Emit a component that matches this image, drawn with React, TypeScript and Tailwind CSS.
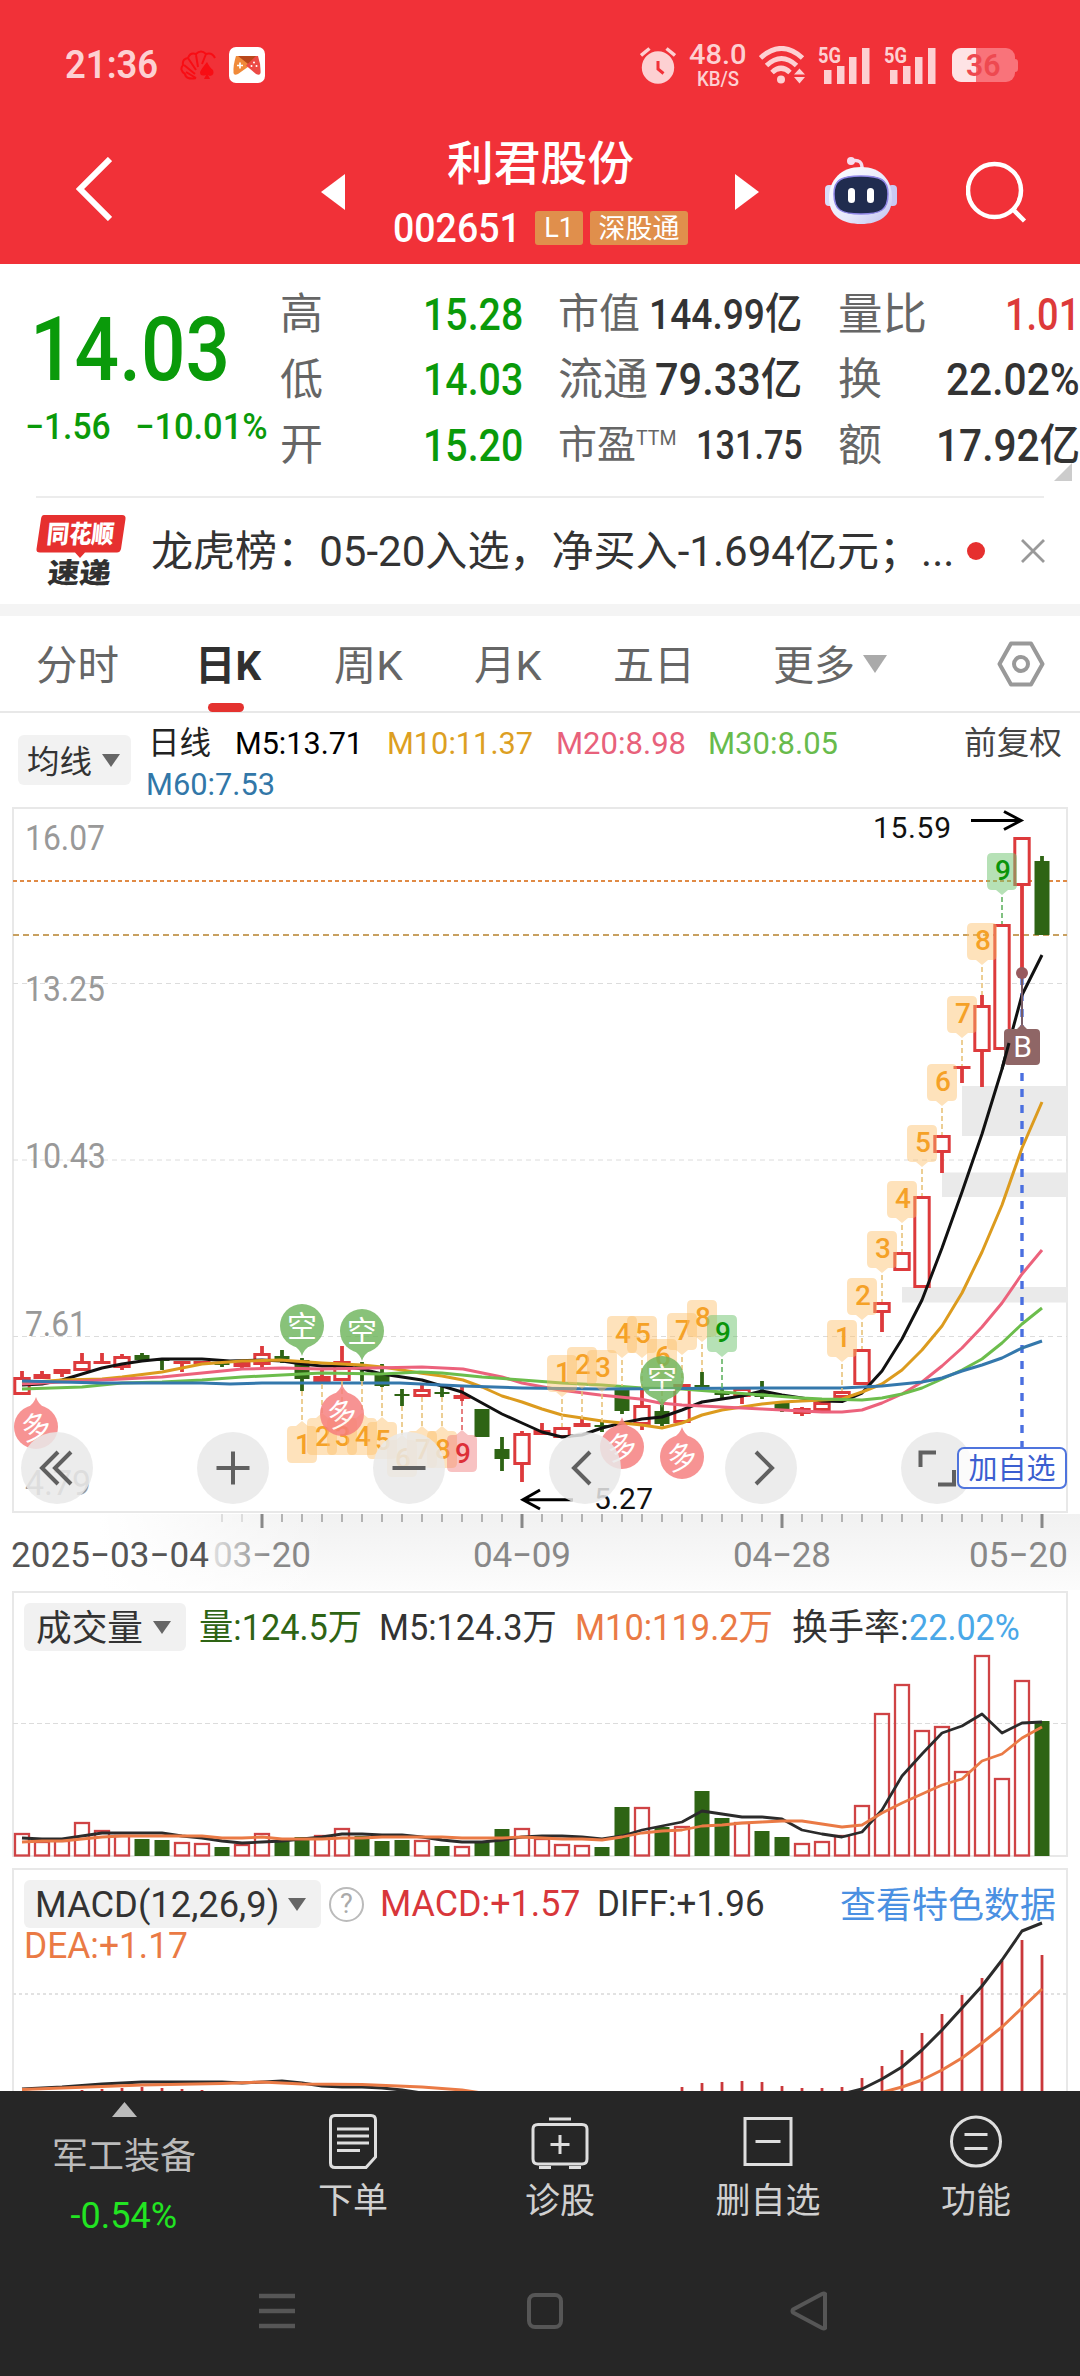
import { useLayoutEffect, useRef, type ReactNode } from "react";

/** Text condensed or widened horizontally so that it fills its box. */
function Fit({ className = "", children }: { className?: string; children: ReactNode }) {
  const outer = useRef<HTMLSpanElement>(null);
  const inner = useRef<HTMLSpanElement>(null);
  useLayoutEffect(() => {
    if (!outer.current || !inner.current) return;
    const natural = inner.current.offsetWidth;
    inner.current.style.transform = `scaleX(${outer.current.clientWidth / natural})`;
  });
  return (
    <span ref={outer} className={"flex shrink-0 justify-start leading-none " + className}>
      <span ref={inner} className="inline-block shrink-0 origin-left whitespace-nowrap">
        {children}
      </span>
    </span>
  );
}

const RED = "#dd3a3c";
const GREEN = "#2e6414";
const cx = (i: number) => 22 + 20 * i;

type Candle = [up: number, high: number, top: number, bottom: number, low: number];
const candles: Candle[] = [
  [1, 1371, 1377, 1395, 1395], [1, 1371, 1374, 1379, 1379], [1, 1369, 1369, 1374, 1377], [1, 1353, 1361, 1371, 1371],
  [1, 1353, 1361, 1364, 1364], [1, 1354, 1356, 1368, 1370], [0, 1353, 1355, 1360, 1361], [0, 1359, 1360, 1361, 1370],
  [1, 1361, 1361, 1364, 1372], [1, 1361, 1361, 1364, 1364], [0, 1361, 1363, 1365, 1367], [1, 1361, 1362, 1367, 1369],
  [1, 1346, 1353, 1365, 1368], [0, 1350, 1356, 1359, 1363], [0, 1358, 1360, 1379, 1391], [1, 1369, 1376, 1382, 1384],
  [1, 1346, 1361, 1381, 1381], [0, 1362, 1365, 1367, 1381], [0, 1364, 1375, 1386, 1387], [0, 1389, 1394, 1396, 1406],
  [1, 1385, 1389, 1397, 1397], [0, 1387, 1392, 1394, 1397], [1, 1387, 1395, 1399, 1401], [0, 1409, 1409, 1437, 1437],
  [0, 1437, 1449, 1459, 1471], [1, 1431, 1433, 1465, 1482], [1, 1423, 1430, 1435, 1435], [1, 1427, 1427, 1438, 1438],
  [1, 1419, 1423, 1427, 1427], [0, 1422, 1425, 1427, 1432], [0, 1386, 1390, 1411, 1414], [1, 1388, 1405, 1425, 1430],
  [0, 1405, 1411, 1424, 1426], [1, 1384, 1384, 1423, 1423], [0, 1372, 1385, 1388, 1388], [0, 1388, 1393, 1395, 1399],
  [1, 1388, 1388, 1397, 1404], [0, 1381, 1393, 1397, 1399], [0, 1401, 1403, 1410, 1412], [1, 1407, 1408, 1414, 1416],
  [1, 1402, 1402, 1411, 1411], [1, 1391, 1391, 1398, 1398], [1, 1349, 1349, 1385, 1385], [1, 1302, 1302, 1313, 1332],
  [1, 1252, 1252, 1271, 1271], [1, 1196, 1196, 1288, 1288], [1, 1135, 1135, 1153, 1173], [1, 1066, 1066, 1069, 1083],
  [1, 995, 1005, 1052, 1087], [1, 924, 924, 1050, 1050], [1, 837, 837, 886, 973], [0, 856, 861, 935, 935],
];

const ma5 = "22,1385 42,1384 62,1380 82,1374 102,1368 122,1364 142,1361 162,1359 202,1359 230,1361 262,1360 282,1361 302,1364 322,1366 342,1366 362,1369 382,1374 402,1377 422,1380 442,1386 462,1392 482,1403 502,1414 522,1423 542,1432 562,1437 582,1435 602,1428 622,1423 642,1419 662,1417 682,1410 702,1402 722,1399 742,1396 762,1391 782,1395 802,1398 822,1401 842,1401.6 862,1393 882,1371 902,1339 922,1300 942,1248 962,1192 982,1134 1002,1069 1022,995 1042,955";
const ma10 = "22,1383 62,1380 102,1379 122,1377 162,1372 202,1364 242,1361 280,1360 322,1363 362,1365 382,1367 402,1370 420,1373 442,1376 463,1380 482,1387 502,1396 522,1402 542,1409 562,1415 582,1418 602,1421 622,1423 642,1425 662,1428 682,1423 702,1415 722,1410 742,1407 762,1404 782,1402 802,1401 822,1400 842,1399 862,1392 882,1384 902,1370 922,1350 942,1326 962,1293 982,1252 1002,1205 1022,1148 1042,1102";
const ma20 = "22,1384 82,1381 122,1379 162,1377 202,1373 242,1369 282,1368 322,1369 422,1367 463,1369 502,1377 522,1383 560,1390 600,1395 640,1399 660,1403 682,1405 722,1407 762,1409 802,1411 822,1412 842,1412 862,1410 882,1403 902,1394 922,1382 942,1366 962,1348 982,1327 1002,1303 1022,1274 1042,1250";
const ma30 = "22,1389 82,1387 122,1383 162,1382 202,1380 242,1377 282,1375 322,1373 382,1374 420,1372 442,1373 482,1377 522,1380 562,1383 602,1385 642,1388 682,1389 722,1392 762,1395 802,1398 822,1399 862,1400 882,1398 902,1394 922,1388 942,1379 962,1370 982,1359 1002,1343 1022,1324 1042,1308";
const ma60 = "22,1381 102,1383 162,1383 202,1383 230,1384 262,1383 322,1383 400,1383 463,1386 522,1388 600,1389 780,1388 842,1388 882,1386 922,1382 942,1378 962,1371 982,1365 1002,1358 1022,1348 1042,1341";

type Mark = [x: number, top: number, label: string, color?: "g" | "r"];
const upMarks: Mark[] = [
  [562, 1355, "1"], [582, 1347, "2"], [602, 1350, "3"], [622, 1316, "4"], [642, 1316, "5"], [662, 1339, "6"],
  [682, 1313, "7"], [702, 1300, "8"], [722, 1315, "9", "g"], [842, 1320, "1"], [862, 1278, "2"], [882, 1231, "3"],
  [902, 1181, "4"], [922, 1125, "5"], [942, 1064, "6"], [962, 996, "7"], [982, 923, "8"], [1002, 853, "9", "g"],
];
const downMarks: Mark[] = [
  [302, 1426, "1"], [322, 1418, "2"], [342, 1418, "3"], [362, 1418, "4"], [382, 1422, "5"], [402, 1440, "6"],
  [422, 1431, "7"], [442, 1431, "8"], [462, 1435, "9", "r"],
];
const markFill = { o: "rgba(252,190,105,0.45)", g: "rgba(115,198,115,0.52)", r: "rgba(240,120,120,0.45)" };
const markText = { o: "#f5a127", g: "#0a950a", r: "#dd2f38" };
const markLine = { o: "#e8c27a", g: "#62b262", r: "#e06060" };

const idx = (x: number) => Math.round((x - 22) / 20);

function UpMark({ m }: { m: Mark }) {
  const [x, y, t, c = "o"] = m;
  return (
    <g>
      <path d={`M${x} ${y + 44}V${candles[idx(x)][1]}`} stroke={markLine[c]} strokeWidth="1.6" strokeDasharray="5 3" />
      <path d={`M${x - 10} ${y}h20q5 0 5 5v27q0 5-5 5h-4l-6 5l-6-5h-4q-5 0-5-5v-27q0-5 5-5z`} fill={markFill[c]} />
      <text x={x + 1} y={y + 27} fontSize="28" fontWeight="500" textAnchor="middle" fill={markText[c]}>{t}</text>
    </g>
  );
}

function DownMark({ m }: { m: Mark }) {
  const [x, y, t, c = "o"] = m;
  return (
    <g>
      <path d={`M${x} ${candles[idx(x)][4]}V${y - 5}`} stroke={markLine[c]} strokeWidth="1.6" strokeDasharray="5 3" />
      <path d={`M${x - 10} ${y}h4l6-5l6 5h4q5 0 5 5v27q0 5-5 5h-20q-5 0-5-5v-27q0-5 5-5z`} fill={markFill[c]} />
      <text x={x + 1} y={y + 28} fontSize="28" fontWeight="500" textAnchor="middle" fill={markText[c]}>{t}</text>
    </g>
  );
}

function Pin({ x, y, long }: { x: number; y: number; long?: boolean }) {
  return (
    <g opacity="0.82">
      <circle cx={x} cy={y} r="22" fill={long ? "#f67c7c" : "#6fb55c"} />
      <path
        d={long ? `M${x - 9} ${y - 19}Q${x - 2} ${y - 23} ${x} ${y - 30}Q${x + 2} ${y - 23} ${x + 9} ${y - 19}z` : `M${x - 9} ${y + 19}Q${x - 2} ${y + 23} ${x} ${y + 30}Q${x + 2} ${y + 23} ${x + 9} ${y + 19}z`}
        fill={long ? "#f67c7c" : "#6fb55c"}
      />
      <text x={x} y={y + 11} fontSize="30" textAnchor="middle" fill="#fff" transform={long ? `rotate(-14 ${x} ${y})` : undefined}>
        {long ? "多" : "空"}
      </text>
    </g>
  );
}

function MainChart() {
  return (
    <svg viewBox="0 806 1080 708" className="block h-[708px] w-[1080px]" fill="none">
      <rect x="13" y="808" width="1054" height="704" stroke="#e8e8e8" strokeWidth="2" />
      {[983.5, 1160, 1336.5].map((y) => (
        <path key={y} d={`M13 ${y}H1067`} stroke="#dcdcdc" strokeDasharray="5 4" />
      ))}
      {([["16.07", 850, 78], ["13.25", 1001, 78], ["10.43", 1168, 79], ["7.61", 1336, 60], ["4.79", 1495, 64]] as const).map(([t, y, w]) => (
        <text key={t} x="25" y={y} fontSize="35" fontWeight="450" fill="#999" textLength={w + 2} lengthAdjust="spacingAndGlyphs">{t}</text>
      ))}
      <g fill="#eaeaea">
        <rect x="962" y="1086" width="106" height="50" />
        <rect x="942" y="1172.5" width="126" height="24.5" />
        <rect x="902" y="1287" width="166" height="15.5" />
      </g>
      <path d="M13 881H1067" stroke="#e08a45" strokeWidth="2" strokeDasharray="4 3" />
      <path d="M13 935H1067" stroke="#c8a060" strokeWidth="2" strokeDasharray="6 4" />
      {candles.map(([up, high, top, bottom, low], i) => {
        const h = bottom - top;
        const c = up ? RED : GREEN;
        return (
          <g key={i}>
            <path d={`M${cx(i)} ${high}V${top}M${cx(i)} ${bottom}V${low}`} stroke={c} strokeWidth="3.8" />
            {up && h > 5 ? (
              <rect x={cx(i) - 7.2} y={top + 1.5} width="14.4" height={h - 3} stroke={c} strokeWidth="3" fill="#fff" />
            ) : (
              <rect x={cx(i) - (up ? 8.5 : 7.5)} y={top} width={up ? 17 : 15} height={Math.max(h, 1)} fill={c} />
            )}
          </g>
        );
      })}
      <path d="M1022 977V1447" stroke="#4a6fe0" strokeWidth="3.4" strokeDasharray="8 8" />
      <g strokeWidth="3" strokeLinejoin="round">
        <polyline points={ma5} stroke="#111" />
        <polyline points={ma10} stroke="#dc9b1e" />
        <polyline points={ma20} stroke="#ec627c" />
        <polyline points={ma30} stroke="#6cbd4c" />
        <polyline points={ma60} stroke="#3478ac" />
      </g>
      {upMarks.map((m, i) => <UpMark key={i} m={m} />)}
      {downMarks.map((m, i) => <DownMark key={i} m={m} />)}
      <Pin x={302} y={1326} />
      <Pin x={362} y={1331} />
      <Pin x={662} y={1378} />
      <Pin x={36} y={1427} long />
      <Pin x={342} y={1414} long />
      <Pin x={622} y={1447} long />
      <Pin x={682} y={1457} long />
      <path d="M1022 973V1026" stroke="#775c66" strokeWidth="2" />
      <circle cx="1022" cy="973" r="6" fill="#985a5e" />
      <path d="M1008 1029h9l5-5l5 5h9q4 0 4 4v28q0 4-4 4h-28q-4 0-4-4v-28q0-4 4-4z" fill="#8f6666" />
      <text x="1022.5" y="1057" fontSize="30" textAnchor="middle" fill="#fff">B</text>
      <path d="M1002 1069L1009 1043" stroke="#111" strokeWidth="3" />
      <g stroke="#000" strokeWidth="3">
        <path d="M971 820.5H1020M1004 811.5L1021 820.5L1004 829.5" />
        <path d="M573 1499.7H524M540 1490L523 1499.7L540 1509" />
      </g>
      <text x="873" y="838" fontSize="30" fill="#111" textLength="78">15.59</text>
      <text x="594" y="1508.5" fontSize="30" fill="#111" textLength="59">5.27</text>
    </svg>
  );
}

const volumes: number[] = [
  1834, 1842, 1841, 1823, 1831, 1836, -1839, -1840, 1843, 1844, -1847, 1845, 1834, -1840, -1837, 1836, 1829, -1836, -1841,
  -1840, 1841, -1846, 1847, -1842, -1829, 1829, 1839, 1845, 1846, -1847, -1807, 1808, -1827, 1827, -1791, -1818, 1823,
  -1831, -1837, 1844, 1842, 1836, 1806, 1714, 1685, 1731, 1727, 1772, 1656, 1779, 1681, -1721,
];
const vol5 = [
  1838, 1839, 1839, 1836, 1833, 1833, 1833, 1833, 1836, 1838, 1841, 1843, 1842, 1841, 1839, 1837, 1834, 1834, 1835, 1835,
  1837, 1840, 1842, 1842, 1840, 1837, 1836, 1836, 1837, 1839, 1836, 1830, 1826, 1822, 1811, 1814, 1817, 1817, 1819, 1830,
  1834, 1837, 1832, 1810, 1776, 1754, 1733, 1726, 1714, 1733, 1723, 1722,
];
const vol10 = [
  1842, 1841, 1841, 1839, 1837, 1836, 1836, 1836, 1836, 1836, 1838, 1838, 1837, 1839, 1839, 1839, 1838, 1838, 1837, 1837,
  1837, 1837, 1838, 1838, 1838, 1837, 1838, 1839, 1839, 1840, 1837, 1833, 1831, 1830, 1826, 1825, 1823, 1822, 1821, 1821,
  1824, 1827, 1825, 1813, 1803, 1794, 1785, 1779, 1761, 1754, 1738, 1727,
];
const poly = (a: number[]) => a.map((y, i) => `${cx(i)},${y}`).join(" ");

function VolumeChart() {
  return (
    <svg viewBox="0 1590 1080 270" className="absolute inset-0 h-[270px] w-[1080px]" fill="none">
      <rect x="13" y="1592" width="1054" height="264" stroke="#e8e8e8" strokeWidth="2" />
      <path d="M13 1723.5H1067" stroke="#dcdcdc" strokeDasharray="5 3" />
      {volumes.map((v, i) =>
        v > 0 ? (
          <rect key={i} x={cx(i) - 7} y={v} width="14" height={1855.5 - v} stroke="#cf4345" strokeWidth="2.3" />
        ) : (
          <rect key={i} x={cx(i) - 7.5} y={-v} width="15" height={1856 + v} fill={GREEN} />
        ),
      )}
      <polyline points={poly(vol5)} stroke="#2b2b2b" strokeWidth="2.8" strokeLinejoin="round" />
      <polyline points={poly(vol10)} stroke="#ea7a45" strokeWidth="2.8" strokeLinejoin="round" />
    </svg>
  );
}

const macd: [number, number][] = [
  [3, 2090], [4, 2089], [5, 2088], [6, 2087], [7, 2088], [8, 2089], [9, 2090], [33, 2087], [34, 2083], [35, 2082], [36, 2081],
  [37, 2082], [38, 2086], [39, 2088], [40, 2088], [41, 2087], [42, 2078], [43, 2066], [44, 2050], [45, 2033], [46, 2014],
  [47, 1995], [48, 1978], [49, 1961], [50, 1940], [51, 1955],
];
const diff = "22,2089 62,2087 102,2084 142,2082 222,2082 242,2083 282,2081 302,2083 322,2086 342,2087 362,2087 382,2088 402,2090 422,2093";
const diffR = "842,2094 862,2089 882,2079 902,2067 922,2050 942,2030 962,2008 982,1986 1002,1960 1022,1931 1042,1923";
const dea = "22,2089.5 62,2088 142,2085 222,2083.5 262,2082 302,2084 362,2084.5 422,2087 462,2090 482,2093";
const deaR = "876,2094 902,2087 922,2080 942,2070 962,2058 982,2043 1002,2027 1022,2008 1042,1989";

function MacdChart() {
  return (
    <svg viewBox="0 1860 1080 231" className="absolute inset-0 h-[231px] w-[1080px]" fill="none">
      <path d="M13 2100V1869H1067V2100" stroke="#e8e8e8" strokeWidth="2" />
      <path d="M13 1994H1067" stroke="#e2e2e2" strokeWidth="2" strokeDasharray="3 3" />
      {macd.map(([i, y]) => (
        <path key={i} d={`M${cx(i)} ${y}V2092`} stroke="#c9383a" strokeWidth="2.8" />
      ))}
      <g strokeWidth="3" strokeLinejoin="round">
        <polyline points={diff} stroke="#2b2b2b" />
        <polyline points={diffR} stroke="#2b2b2b" />
        <polyline points={dea} stroke="#ea7a45" />
        <polyline points={deaR} stroke="#ea7a45" />
      </g>
    </svg>
  );
}

function Signal() {
  return (
    <svg viewBox="0 0 52 38" className="h-[38px] w-[52px] shrink-0 overflow-visible">
      <text x="0" y="17" fontSize="22" fontWeight="700" fill="#fdd0d2" textLength="23" lengthAdjust="spacingAndGlyphs">5G</text>
      <path d="M6 24h7.5v14H6zM19 20h7.5v18H19zM31 11h7.5v27H31zM44 2h7.5v36H44z" fill="#fdd0d2" />
    </svg>
  );
}

function StatusBar() {
  return (
    <div className="flex h-[130px] items-center text-[#fdd0d2]">
      <Fit className="ml-[65px] w-[93px] text-[38px] font-semibold">21:36</Fit>
      <svg viewBox="0 0 36 30" className="ml-[22px] h-[30px] w-[36px]" fill="none" stroke="#f80d14" strokeWidth="2">
        <path d="M16 28Q6 30 5 24Q-1 20 3 15Q2 9 8 8Q10 2 16 4Q21 -1 26 4Q32 2 35 8M16 28L6 22M15 24L4 15M16 20L8 8M18 17L16 5M22 14L26 4" />
        <path d="M27 12Q30 18 33 20Q35 25 30 26L28 25L30 29H24L26 25Q20 27 20 22Q22 18 27 12z" fill="#f80d14" stroke="none" />
      </svg>
      <svg viewBox="0 0 36 36" className="ml-[13px] h-[36px] w-[36px]">
        <rect width="36" height="36" rx="7" fill="#fff" />
        <path d="M8 9H28L18 19z" fill="#b8471a" />
        <path d="M7 9Q4 18 4.500 26Q5 29 9 27L21 18.500L9 9z" fill="#f08a3a" />
        <path d="M29 9Q32 18 31.500 26Q31 29 27 27L17 18.500L27 9z" fill="#ec4a45" />
        <path d="M11 15.500v6M8 18.500h6" stroke="#fff" strokeWidth="1.700" />
        <g fill="#fff"><circle cx="25" cy="15.500" r="1" /><circle cx="22.500" cy="19" r="1" /><circle cx="27.500" cy="19" r="1" /></g>
      </svg>
      <svg viewBox="0 0 36 37" className="ml-[375px] h-[37px] w-[36px]">
        <circle cx="18" cy="20.500" r="16.200" fill="#fdd0d2" />
        <path d="M1 8.500L9.500 1.500M35 8.500L26.500 1.500" stroke="#fdd0d2" strokeWidth="3.500" />
        <path d="M18 14v8l5.500 4.500" stroke="#f13138" strokeWidth="3" fill="none" />
      </svg>
      <div className="ml-[13px] flex w-[58px] flex-col items-center">
        <Fit className="w-[58px] text-[28px] font-medium leading-[20px]">48.0</Fit>
        <Fit className="w-[42px] text-[20px] font-medium leading-[15px]">KB/S</Fit>
      </div>
      <svg viewBox="0 0 46 38" className="ml-[12px] h-[38px] w-[46px]" fill="none" stroke="#fdd0d2" strokeWidth="5">
        <path d="M1.500 12Q22.500 -7 43.500 12M7.500 19.500Q22.500 5.500 37.500 19.500M13 26.500Q22 18 31 26.500" />
        <circle cx="22" cy="33.500" r="4" fill="#fdd0d2" stroke="none" />
        <path d="M35 28.500l5.500-6l5.500 6zM35 31l5.500 6.500l5.500-6.500z" fill="#fdd0d2" stroke="none" />
      </svg>
      <div className="ml-[13px] flex gap-[14px]"><Signal /><Signal /></div>
      <div className="relative ml-[16px] flex h-[34px] w-[63px] items-center rounded-[9px] bg-[#f9737a]">
        <span className="absolute inset-y-0 left-0 w-[24px] rounded-l-[9px] bg-[#fee3e5]" />
        <Fit className="relative ml-[14px] w-[35px] text-[32px] font-semibold text-[#ee4950]">36</Fit>
      </div>
      <span className="h-[13px] w-[3px] rounded-r bg-[#f9737a]" />
    </div>
  );
}

function TitleBar() {
  return (
    <div className="flex h-[134px] items-start text-white">
      <svg viewBox="0 0 36 64" className="ml-[76px] mt-[27px] h-[64px] w-[36px]" fill="none" stroke="#fff" strokeWidth="6">
        <path d="M34 2L4 32L34 62" />
      </svg>
      <svg viewBox="0 0 24 36" className="ml-[209px] mt-[44px] h-[36px] w-[24px]"><path d="M24 0V36L0 18z" fill="#fff" /></svg>
      <div className="ml-[48px] w-[296px]">
        <div className="mt-[9px] flex h-[50px] items-center pl-[54px]">
          <Fit className="w-[187px] text-[46.5px] font-medium">利君股份</Fit>
        </div>
        <div className="mt-[22px] flex h-[34px] items-center">
          <Fit className="w-[128px] text-[41px] font-medium">002651</Fit>
          <span className="ml-[14px] flex h-[34px] w-[48px] items-center justify-center rounded-[3px] bg-[#e08f4c] text-[27px] leading-none">L1</span>
          <span className="ml-[7px] flex h-[34px] w-[98px] items-center justify-center rounded-[3px] bg-[#e08f4c] pt-[2px] text-[27px] leading-none">深股通</span>
        </div>
      </div>
      <svg viewBox="0 0 24 36" className="ml-[46px] mt-[44px] h-[36px] w-[24px]"><path d="M0 0V36L24 18z" fill="#fff" /></svg>
      <svg viewBox="0 0 72 68" className="ml-[66px] mt-[26px] h-[68px] w-[72px]">
        <defs>
          <linearGradient id="shell" x1="0" y1="0" x2="1" y2="1">
            <stop offset="0" stopColor="#fff" /><stop offset=".6" stopColor="#e6e8fb" /><stop offset="1" stopColor="#bfc0f0" />
          </linearGradient>
        </defs>
        <path d="M26 5Q38 2 37 14" fill="none" stroke="#f3dcee" strokeWidth="3.500" />
        <circle cx="26" cy="5" r="4" fill="#f7dcee" />
        <rect x="0" y="29" width="9" height="21" rx="4" fill="#dadcf8" /><rect x="63" y="29" width="9" height="21" rx="4" fill="#c9c9f3" />
        <path d="M36 11C56 11 67 24 67 42C67 60 54 68 36 68C17 68 4 60 4 42C4 24 16 11 36 11z" fill="url(#shell)" />
        <path d="M36 20C56 20 63 24 63 38C63 54 56 58 36 58C16 58 9 54 9 38C9 24 16 20 36 20z" fill="#202c4f" stroke="#8f86e6" strokeWidth="1.500" />
        <rect x="23" y="32" width="7" height="15" rx="3.500" fill="#fff" /><rect x="42" y="32" width="7" height="15" rx="3.500" fill="#fff" />
      </svg>
      <svg viewBox="0 0 62 62" className="ml-[69px] mt-[31px] h-[62px] w-[62px]" fill="none" stroke="#fff" strokeWidth="4.500">
        <ellipse cx="28.500" cy="29.500" rx="26.500" ry="26.500" /><path d="M47 48.500L58.500 60" />
      </svg>
    </div>
  );
}

function QuotePanel() {
  const v = "text-[44px] font-medium";
  return (
    <div className="relative flex h-[232px] text-[#333]">
      <div className="w-[276px] text-[#0a9a0a]">
        <div className="mt-[47px] flex h-[76px] items-center"><Fit className="ml-[30px] w-[200px] text-[89px] font-medium">14.03</Fit></div>
        <div className="mt-[20px] flex h-[40px] items-center text-[36px] font-medium">
          <Fit className="ml-[25px] w-[86px]">−1.56</Fit>
          <Fit className="ml-[24px] w-[133px]">−10.01%</Fit>
        </div>
      </div>
      <div className="mt-[18px] w-[248px]">
        {[["高", "15.28"], ["低", "14.03"], ["开", "15.20"]].map(([k, n]) => (
          <div key={k} className="flex h-[65.500px] items-center pl-[4px]">
            <span className="w-[143px] text-[43px] leading-none text-[#666]">{k}</span>
            <Fit className={"w-[100px] text-[#0a9a0a] " + v}>{n}</Fit>
          </div>
        ))}
      </div>
      <div className="mt-[18px] w-[279px] pl-[34px]">
        <div className="flex h-[65.500px] items-center">
          <Fit className="w-[82px] text-[41px] text-[#666]">市值</Fit><Fit className="ml-[9px] w-[153px] text-[43px] font-medium">144.99亿</Fit>
        </div>
        <div className="flex h-[65.500px] items-center">
          <Fit className="w-[90px] text-[44px] text-[#666]">流通</Fit><Fit className="ml-[7px] w-[147px] text-[44px] font-medium">79.33亿</Fit>
        </div>
        <div className="flex h-[65.500px] items-center">
          <Fit className="w-[78px] text-[39px] text-[#666]">市盈</Fit><Fit className="-mt-[16px] w-[40px] text-[20px] text-[#666]">TTM</Fit>
          <Fit className="ml-[20px] w-[107px] text-[40px] font-medium">131.75</Fit>
        </div>
      </div>
      <div className="mt-[18px] w-[277px] pl-[35px]">
        <div className="flex h-[65.500px] items-center">
          <Fit className="w-[89px] text-[44px] text-[#666]">量比</Fit><Fit className={"ml-[78px] w-[75px] text-[#dd3a3a] " + v}>1.01</Fit>
        </div>
        <div className="flex h-[65.500px] items-center">
          <Fit className="w-[44px] text-[44px] text-[#666]">换</Fit><Fit className={"ml-[64px] w-[134px] " + v}>22.02%</Fit>
        </div>
        <div className="flex h-[65.500px] items-center">
          <Fit className="w-[44px] text-[44px] text-[#666]">额</Fit><Fit className={"ml-[54px] w-[144px] " + v}>17.92亿</Fit>
        </div>
      </div>
      <svg viewBox="0 0 18 18" className="absolute bottom-[15px] right-[8px] h-[18px] w-[18px]"><path d="M18 0V18H0z" fill="#ccc" /></svg>
    </div>
  );
}

function News() {
  return (
    <div className="mx-[36px] flex h-[108px] items-center border-t-2 border-[#ececec]">
      <div className="relative h-[74px] w-[90px] shrink-0">
        <svg viewBox="0 0 90 46" className="absolute left-0 top-0 h-[46px] w-[90px]">
          <path d="M8 1H86Q90 1 89.500 5L85 35Q84 38.500 81 38.500H49L44 44L39 38.500H4Q0 38.500 .5 35L5 5Q5.500 1 8 1z" fill="#e6302f" />
        </svg>
        <Fit className="absolute left-[11px] top-[8px] w-[67px] -skew-x-6 text-[25px] font-black text-white">同花顺</Fit>
        <Fit className="absolute left-[12px] top-[46px] w-[63px] -skew-x-6 text-[28px] font-black text-[#303030]">速递</Fit>
      </div>
      <Fit className="ml-[25px] mt-[2px] w-[803px] text-[42px] text-[#333]">龙虎榜：05-20入选，净买入-1.694亿元；...</Fit>
      <span className="ml-[13px] h-[18px] w-[18px] shrink-0 rounded-full bg-[#e6302f]" />
      <svg viewBox="0 0 24 24" className="ml-[36px] h-[24px] w-[24px] shrink-0" stroke="#999" strokeWidth="2.800"><path d="M1 1L23 23M23 1L1 23" /></svg>
    </div>
  );
}

function Tabs() {
  return (
    <div className="flex h-[97px] items-center border-b-2 border-[#e8e8e8] text-[41px] text-[#666]">
      <Fit className="ml-[36px] mt-[5px] w-[83px]">分时</Fit>
      <div className="relative ml-[76px] flex h-full items-center">
        <Fit className="mt-[5px] w-[66px] font-bold text-[#303030]">日K</Fit>
        <span className="absolute -bottom-px left-[13px] h-[9px] w-[36px] rounded-full bg-[#e4322f]" />
      </div>
      <Fit className="ml-[73px] mt-[5px] w-[69px]">周K</Fit>
      <Fit className="ml-[71px] mt-[5px] w-[68px]">月K</Fit>
      <Fit className="ml-[71px] mt-[5px] w-[82px]">五日</Fit>
      <Fit className="ml-[78px] mt-[5px] w-[82px]">更多</Fit>
      <svg viewBox="0 0 24 18" className="ml-[8px] h-[18px] w-[24px]"><path d="M0 0H24L12 18z" fill="#aaa" /></svg>
      <svg viewBox="0 0 48 46" className="ml-[110px] h-[46px] w-[48px]" fill="none" stroke="#999" strokeWidth="4">
        <path d="M14 2.500H34L45.500 23L34 43.500H14L2.500 23z" strokeLinejoin="round" /><circle cx="24" cy="23" r="7" />
      </svg>
    </div>
  );
}

function Down({ className = "" }: { className?: string }) {
  return <svg viewBox="0 0 18 13" className={"h-[13px] w-[18px] shrink-0 " + className}><path d="M0 0H18L9 13z" fill="#666" /></svg>;
}

function MaLegend() {
  return (
    <div className="flex h-[92px] items-start text-[32px]">
      <div className="ml-[18px] mt-[22px] flex h-[50px] w-[113px] items-center rounded-[6px] bg-[#f2f2f2] text-[#333]">
        <Fit className="ml-[9px] mt-[3px] w-[65px]">均线</Fit><Down className="ml-[10px]" />
      </div>
      <div className="ml-[17px] flex w-[912px] flex-col">
        <div className="mt-[9px] flex h-[41px] items-center">
          <Fit className="w-[63px] text-[#222]">日线</Fit>
          <Fit className="ml-[24px] w-[128px] text-black">M5:13.71</Fit>
          <Fit className="ml-[24px] w-[146px] text-[#dd9f22]">M10:11.37</Fit>
          <Fit className="ml-[23px] w-[130px] text-[#e8617b]">M20:8.98</Fit>
          <Fit className="ml-[22px] w-[130px] text-[#68bb4c]">M30:8.05</Fit>
          <Fit className="ml-[126px] w-[98px] text-[#444]">前复权</Fit>
        </div>
        <div className="flex h-[41px] items-center">
          <Fit className="-ml-[2px] w-[129px] text-[#3277a8]">M60:7.53</Fit>
        </div>
      </div>
    </div>
  );
}

function Round({ d }: { d: string }) {
  return (
    <button className="h-[72px] w-[72px] rounded-full bg-[#e9e9e9]/85">
      <svg viewBox="0 0 72 72" fill="none" stroke="#606060" strokeWidth="4"><path d={d} /></svg>
    </button>
  );
}

function DateAxis() {
  return (
    <div className="relative h-[76px] bg-linear-to-b from-[#f1f1f1] to-[#fcfcfc]">
      <div className="absolute inset-y-0 left-0 w-[330px] bg-linear-to-r from-white from-30% to-transparent" />
      <svg viewBox="0 1514 1080 76" className="relative block h-[76px] w-[1080px]">
        {Array.from({ length: 42 }, (_, k) => 222 + 20 * k).map((x) => (
          <path key={x} d={(x - 262) % 260 === 0 ? `M${x} 1513V1528` : `M${x} 1513V1522`} stroke={x < 262 ? "#ccc" : "#888"} strokeWidth={(x - 262) % 260 === 0 ? 3 : 1.2} />
        ))}
        <defs>
          <linearGradient id="fade" gradientUnits="userSpaceOnUse" x1="215" x2="270" y1="0" y2="0">
            <stop offset="0" stopColor="#ddd" /><stop offset="1" stopColor="#888" />
          </linearGradient>
        </defs>
        <g fontSize="35" fill="#888">
          <text x="11" y="1566.500" fill="#555" textLength="198" >2025−03−04</text>
          <text x="213" y="1566.500" fill="url(#fade)" textLength="98">03−20</text>
          <text x="473" y="1566.500" textLength="98">04−09</text>
          <text x="733" y="1566.500" textLength="98">04−28</text>
          <text x="969" y="1566.500" textLength="99">05−20</text>
        </g>
      </svg>
    </div>
  );
}

function BottomItem({ label, className, children }: { label: string; className: string; children: ReactNode }) {
  return (
    <div className={"mt-[20px] flex flex-col items-center " + className}>
      <svg viewBox="0 0 60 60" className="h-[60px] w-[60px]" fill="none" stroke="#dedede" strokeWidth="3">{children}</svg>
      <span className="mt-[13px] whitespace-nowrap text-[35px] leading-none text-[#d0d0d0]">{label}</span>
    </div>
  );
}

export default function App() {
  return (
    <div className="h-[2376px] w-[1080px] overflow-hidden bg-white font-['Roboto','Noto_Sans_CJK_SC',sans-serif]">
      <header className="h-[264px] bg-[#f13138]"><StatusBar /><TitleBar /></header>
      <QuotePanel />
      <News />
      <div className="h-[12px] bg-[#f4f4f4]" />
      <Tabs />
      <MaLegend />
      <section className="relative h-[709px]">
        <div className="pt-px"><MainChart /></div>
        <div className="absolute left-[21px] top-[627px] flex gap-[104px]">
          <Round d="M37 20L21 36L37 52M50 20L34 36L50 52" />
          <Round d="M36 19.500V52.500M19.500 36H52.500" />
          <Round d="M19.500 36H52.500" />
          <Round d="M41 20L25 36L41 52" />
          <Round d="M31 20L47 36L31 52" />
          <Round d="M19.500 35V20.500H35M53 38V52.500H37" />
        </div>
        <div className="absolute left-[957px] top-[642px] flex h-[42px] w-[110px] items-center justify-center rounded-[7px] border-2 border-[#4f74dd] bg-white/80 pt-[3px] text-[29px] leading-none text-[#3c5fd0]">加自选</div>
      </section>
      <DateAxis />
      <section className="relative h-[270px]">
        <VolumeChart />
        <div className="relative flex items-center pt-[13px] text-[36px]">
          <div className="ml-[24px] flex h-[48px] w-[162px] items-center rounded-[6px] bg-[#f1f1f1] text-[#333]">
            <Fit className="ml-[12px] mt-[3px] w-[107px]">成交量</Fit><Down className="ml-[10px]" />
          </div>
          <Fit className="ml-[13px] mt-[2px] w-[163px] text-[#2e6414]">量:124.5万</Fit>
          <Fit className="ml-[17px] mt-[2px] w-[178px] text-[#333]">M5:124.3万</Fit>
          <Fit className="ml-[18px] mt-[2px] w-[198px] text-[#ea7a45]">M10:119.2万</Fit>
          <Fit className="ml-[19px] mt-[2px] w-[117px] text-[#333]">换手率:</Fit>
          <Fit className="mt-[2px] w-[111px] text-[#4aa8e8]">22.02%</Fit>
        </div>
      </section>
      <section className="relative h-[231px] overflow-hidden">
        <MacdChart />
        <div className="relative flex items-center pt-[20px] text-[36px]">
          <div className="ml-[24px] flex h-[48px] w-[297px] items-center rounded-[6px] bg-[#f1f1f1] text-[#333]">
            <Fit className="ml-[11px] mt-[2px] w-[244px]">MACD(12,26,9)</Fit><Down className="ml-[9px]" />
          </div>
          <span className="ml-[8px] flex h-[35px] w-[35px] items-center justify-center rounded-full border-[2.500px] border-[#bbb] text-[27px] leading-none text-[#aaa]">?</span>
          <Fit className="ml-[16px] w-[200px] text-[#d8363a]">MACD:+1.57</Fit>
          <Fit className="ml-[17px] w-[168px] text-[#333]">DIFF:+1.96</Fit>
          <Fit className="ml-[75px] mt-[3px] w-[216px] text-[#4a90e2]">查看特色数据</Fit>
        </div>
        <Fit className="relative ml-[24px] w-[164px] text-[36px] leading-[34px] text-[#ea7a45]">DEA:+1.17</Fit>
      </section>
      <footer className="h-[285px] bg-[#262626]">
        <div className="flex h-[170px]">
          <div className="ml-[44px] flex w-[160px] flex-col items-center">
            <svg viewBox="0 0 25 15" className="mt-[11px] h-[15px] w-[25px]"><path d="M12.500 0L25 15H0z" fill="#bbb" /></svg>
            <span className="mt-[22px] whitespace-nowrap text-[36px] leading-none text-[#bbb]">军工装备</span>
            <Fit className="mt-[23px] w-[107px] text-[36px] text-[#22e422]">-0.54%</Fit>
          </div>
          <BottomItem label="下单" className="ml-[94px] w-[110px]">
            <path d="M12 4.500H48Q52.500 4.500 52.500 9V46L43 56.500H12Q7.500 56.500 7.500 52V9Q7.500 4.500 12 4.500zM14 18H46M14 25H46M14 32H46M14 39.500H37" />
          </BottomItem>
          <BottomItem label="诊股" className="ml-[97px] w-[110px]">
            <path d="M8 13.500H52Q57 13.500 57 18V48Q57 53 52 53H8Q3 53 3 48V18Q3 13.500 8 13.500zM19 8H41M30 24V43M20.500 33.500H39.500M9 56.500H21M39 56.500H51" />
          </BottomItem>
          <BottomItem label="删自选" className="ml-[98px] w-[110px]"><path d="M7 7.500H53V53.500H7zM17.500 30.500H42.500" /></BottomItem>
          <BottomItem label="功能" className="ml-[98px] w-[110px]"><circle cx="30" cy="30.500" r="24.500" /><path d="M18.500 23.500H41.500M18.500 37.500H41.500" /></BottomItem>
        </div>
        <div className="flex h-[100px] items-center">
          <svg viewBox="0 0 36 36" className="ml-[259px] h-[36px] w-[36px]" stroke="#565656" strokeWidth="4.500"><path d="M0 3H36M0 18H36M0 33H36" /></svg>
          <svg viewBox="0 0 36 36" className="ml-[232px] h-[36px] w-[36px]" fill="none" stroke="#565656" strokeWidth="4"><rect x="2" y="2" width="32" height="32" rx="6" /></svg>
          <svg viewBox="0 0 37 40" className="ml-[227px] h-[40px] w-[37px]" fill="none" stroke="#565656" strokeWidth="4"><path d="M35 3V37Q34 38 32 37L3 21.500Q2 20 3 18.500L32 3Q34 2 35 3z" /></svg>
        </div>
      </footer>
    </div>
  );
}
